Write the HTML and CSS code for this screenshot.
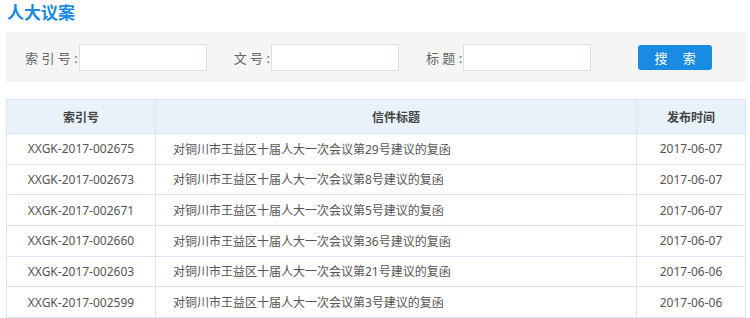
FILE: index.html
```html
<!DOCTYPE html>
<html lang="zh-CN">
<head>
  <meta charset="UTF-8">
  <title>人大议案</title>
  <link rel="stylesheet" href="styles.css">
</head>
<body>
  <h1 class="page-title">人大议案</h1>

  <form class="search-bar">
    <label class="field">
      <span class="field-label">索 引 号 :</span>
      <input type="text" name="index">
    </label>
    <label class="field">
      <span class="field-label">文 号 :</span>
      <input type="text" name="docno">
    </label>
    <label class="field">
      <span class="field-label">标 题 :</span>
      <input type="text" name="title">
    </label>
    <button type="button" class="search-btn">搜 索</button>
  </form>

  <table class="result-table">
    <thead>
      <tr>
        <th class="col-index">索引号</th>
        <th>信件标题</th>
        <th class="col-date">发布时间</th>
      </tr>
    </thead>
    <tbody>
      <tr>
        <td class="col-index">XXGK-2017-002675</td>
        <td class="col-title">对铜川市王益区十届人大一次会议第29号建议的复函</td>
        <td class="col-date">2017-06-07</td>
      </tr>
      <tr>
        <td class="col-index">XXGK-2017-002673</td>
        <td class="col-title">对铜川市王益区十届人大一次会议第8号建议的复函</td>
        <td class="col-date">2017-06-07</td>
      </tr>
      <tr>
        <td class="col-index">XXGK-2017-002671</td>
        <td class="col-title">对铜川市王益区十届人大一次会议第5号建议的复函</td>
        <td class="col-date">2017-06-07</td>
      </tr>
      <tr>
        <td class="col-index">XXGK-2017-002660</td>
        <td class="col-title">对铜川市王益区十届人大一次会议第36号建议的复函</td>
        <td class="col-date">2017-06-07</td>
      </tr>
      <tr>
        <td class="col-index">XXGK-2017-002603</td>
        <td class="col-title">对铜川市王益区十届人大一次会议第21号建议的复函</td>
        <td class="col-date">2017-06-06</td>
      </tr>
      <tr>
        <td class="col-index">XXGK-2017-002599</td>
        <td class="col-title">对铜川市王益区十届人大一次会议第3号建议的复函</td>
        <td class="col-date">2017-06-06</td>
      </tr>
    </tbody>
  </table>
</body>
</html>
```

FILE: styles.css
```css
body {
  margin: 0;
  padding: 0 4px 0 6px;
  font-family: "Noto Sans", "Noto Sans CJK SC", sans-serif;
  font-size: 12px;
  color: #555;
  background: #fff;
}
.page-title {
  margin: 0;
  height: 32px;
  line-height: 25px;
  padding-left: 1px;
  font-size: 17px;
  font-weight: bold;
  color: #1a8be2;
}
.search-bar {
  display: flex;
  align-items: center;
  height: 50px;
  padding-left: 19px;
  background: #f5f5f5;
}
.field {
  display: flex;
  align-items: center;
  margin-right: 27px;
}
.field-label {
  margin-right: 1px;
  color: #666;
  font-size: 13px;
}
.field input {
  box-sizing: border-box;
  width: 128px;
  height: 27px;
  border: 1px solid #d6e3ef;
  background: #fff;
  padding: 0 4px;
}
.search-btn {
  margin-left: 20px;
  width: 74px;
  height: 25px;
  border: none;
  border-radius: 3px;
  background: #1a8be2;
  color: #fff;
  font-family: inherit;
  font-size: 13px;
  letter-spacing: 6px;
  text-indent: 6px;
  cursor: pointer;
}
.result-table {
  width: 740px;
  margin-top: 17px;
  border-collapse: collapse;
}
.result-table th,
.result-table td {
  border: 1px solid #d9e7f4;
  height: 29.67px;
  padding: 0;
  text-align: center;
}
.result-table th {
  height: 33px;
  background: #e9f2fb;
  color: #444;
  font-weight: bold;
}
.result-table td {
  color: #555;
}
.result-table .col-index {
  width: 148px;
}
.result-table .col-date {
  width: 108px;
}
.result-table td.col-title {
  text-align: left;
  padding-left: 17px;
}
```
